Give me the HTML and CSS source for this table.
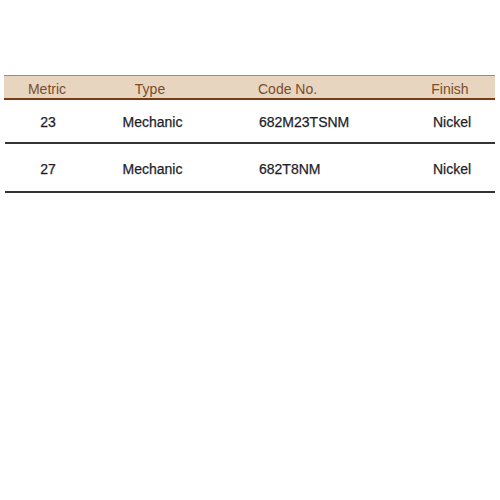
FILE: index.html
```html
<!DOCTYPE html>
<html>
<head>
<meta charset="utf-8">
<link rel="stylesheet" href="styles.css">
</head>
<body>
<div class="table">
  <div class="row head">
    <div class="c c1">Metric</div>
    <div class="c c2">Type</div>
    <div class="c c3">Code No.</div>
    <div class="c c4">Finish</div>
  </div>
  <div class="row data r1">
    <div class="c c1">23</div>
    <div class="c c2">Mechanic</div>
    <div class="c c3">682M23TSNM</div>
    <div class="c c4">Nickel</div>
  </div>
  <div class="row data r2">
    <div class="c c1">27</div>
    <div class="c c2">Mechanic</div>
    <div class="c c3">682T8NM</div>
    <div class="c c4">Nickel</div>
  </div>
</div>
</body>
</html>
```
FILE: styles.css
```css
html, body {
  margin: 0;
  padding: 0;
  background: #fff;
}
body {
  font-family: "Liberation Sans", Arial, sans-serif;
  font-size: 14px;
}
.table {
  margin: 75px 0 0 4px;
  width: 491px;
}
.row {
  display: grid;
  grid-template-columns: 86px 120px 195px 90px;
  align-items: center;
  box-sizing: border-box;
}
.head {
  height: 25px;
  background: #e8d5c0;
  border-top: 1px solid #b5855e;
  border-bottom: 2px solid #7a3c14;
  color: #7a4c2c;
}
.head .c { padding-top: 3px; }
.data {
  color: #1e1e2a;
  border-bottom: 2px solid #333;
  -webkit-text-stroke: 0.25px #1e1e2a;
}
.r1 { height: 44px; padding-top: 2px; margin-left: 1px; }
.r2 { height: 49px; padding-top: 3px; margin-left: 1px; }
.c { text-align: center; }
.c3 { text-align: left; padding-left: 48px; }
.data .c2 { padding-left: 3px; }
.data .c4 { padding-left: 2px; }
```
